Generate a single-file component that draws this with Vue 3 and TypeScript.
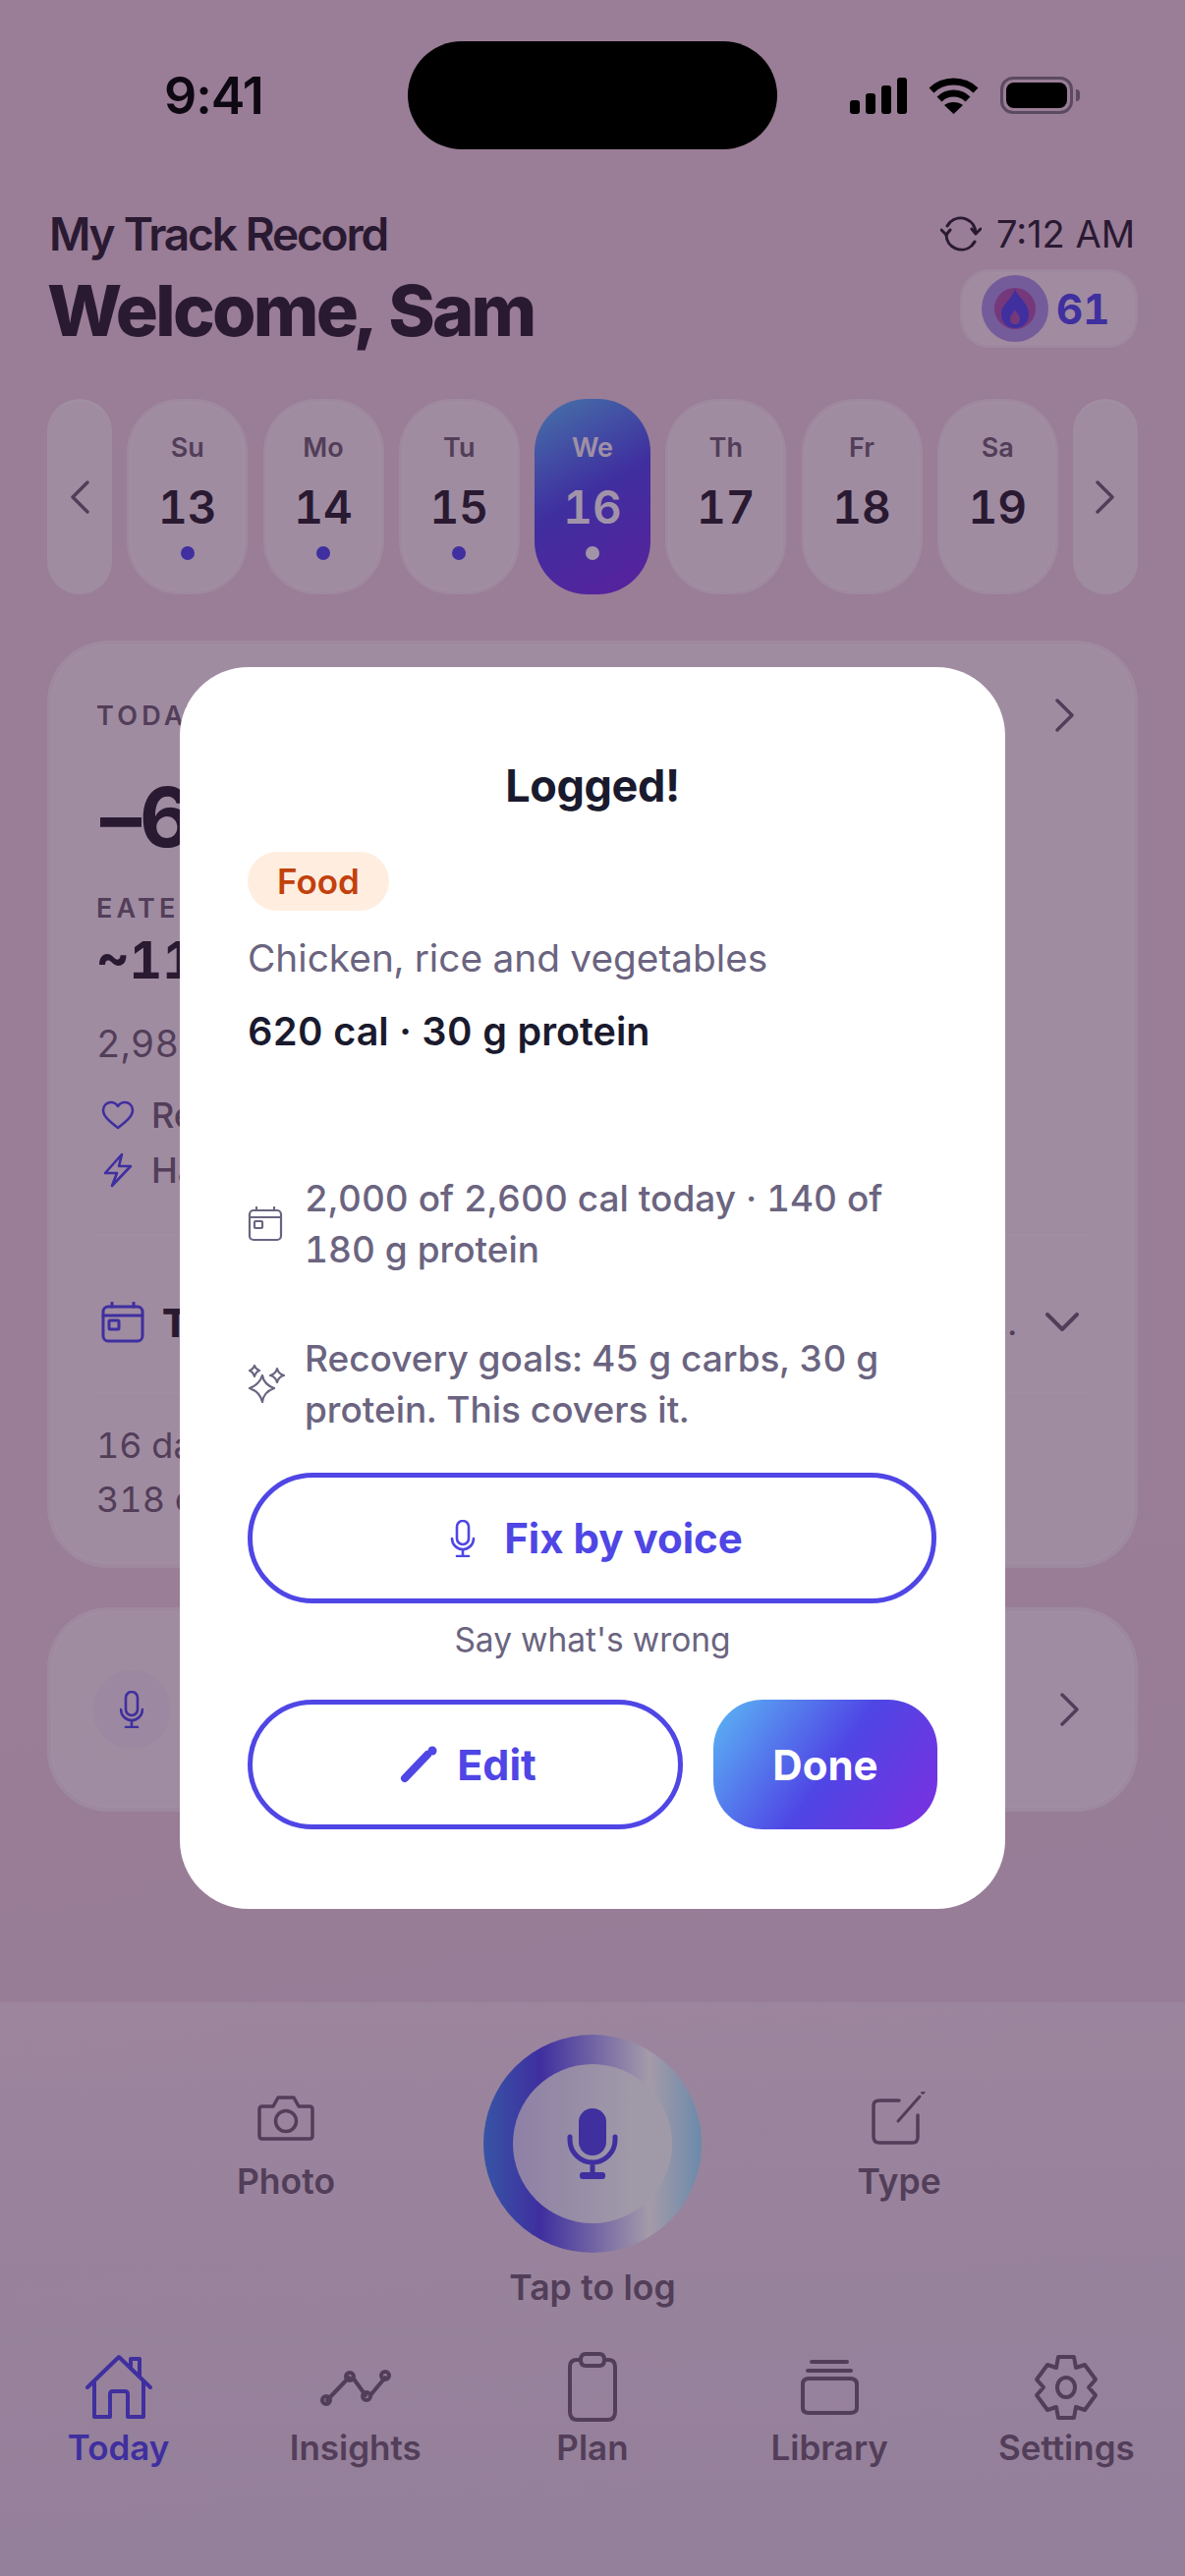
<script setup lang="ts">
interface Day { label: string; num: number; dot: boolean; active: boolean }
const days: Day[] = [
  { label: 'Su', num: 13, dot: true, active: false },
  { label: 'Mo', num: 14, dot: true, active: false },
  { label: 'Tu', num: 15, dot: true, active: false },
  { label: 'We', num: 16, dot: true, active: true },
  { label: 'Th', num: 17, dot: false, active: false },
  { label: 'Fr', num: 18, dot: false, active: false },
  { label: 'Sa', num: 19, dot: false, active: false },
]
const navPaths: { label: string; active: boolean; w: number; h: number; vb: string; d: string; dots?: number[][] }[] = [
  { label: 'Today', active: true, w: 70, h: 68, vb: '0 0 70 68', d: 'M3 34 35 3 67 34M10 28V64H26V41Q26 38 29 38H41Q44 38 44 41V64H60V28M47 14V5H56V22' },
  { label: 'Insights', active: false, w: 72, h: 40, vb: '0 0 72 40', d: 'M7 33 29 10M33 10 46 28M51 28 66 10', dots: [[6, 33], [30, 9], [47, 29], [66, 8]] },
  { label: 'Plan', active: false, w: 52, h: 72, vb: '0 0 52 72', d: 'M14 8H10Q3 8 3 15V61Q3 69 11 69H41Q49 69 49 61V15Q49 8 42 8H38M19 2H33Q38 2 38 8T33 14H19Q14 14 14 8T19 2Z' },
  { label: 'Library', active: false, w: 60, h: 58, vb: '0 0 60 58', d: 'M12 3H48M8 12H52M9 20H51Q58 20 58 26V50Q58 55 51 55H9Q3 55 3 50V26Q3 20 9 20Z' },
  { label: 'Settings', active: false, w: 66, h: 68, vb: '0 0 66 68', d: 'M25 3H41L43 14 52 11 63 26 56 34 63 42 52 57 43 54 41 65H25L23 54 14 57 3 42 10 34 3 26 14 11 23 14ZM33 24A9 10 0 1 1 33 44 9 10 0 0 1 33 24Z' },
]
</script>

<template>
  <div class="screen">
    <div class="status">
      <span class="clock">9:41</span>
      <div class="island"></div>
      <div class="status-icons">
        <svg width="58" height="37" viewBox="0 0 58 37" fill="#000">
          <rect x="0" y="23" width="10" height="14" rx="3" />
          <rect x="16" y="16" width="10" height="21" rx="3" />
          <rect x="32" y="8" width="10" height="29" rx="3" />
          <rect x="48" y="0" width="10" height="37" rx="3" />
        </svg>
        <svg width="51" height="37" viewBox="0 0 51 37" fill="none" stroke="#000" stroke-width="7">
          <path d="M3 13C15 1 36 1 48 13" />
          <path d="M11 22C19 14 32 14 40 22" />
          <path d="M25.500 37 16 28C21 24 30 24 35 28Z" fill="#000" stroke="none" />
        </svg>
        <div class="battery"><i></i></div>
      </div>
    </div>

    <header class="head">
      <div>
        <div class="brand">My Track Record</div>
        <h1 class="hello">Welcome, Sam</h1>
      </div>
      <div class="head-right">
        <div class="sync">
          <svg width="42" height="36" viewBox="0 0 42 36" fill="none" stroke="#2b2330" stroke-width="3" stroke-linecap="round" stroke-linejoin="round">
            <path d="M36 17A15.500 15.500 0 0 0 10 6L7 10M6 19A15.500 15.500 0 0 0 32 30L35 26" />
            <path d="M1 14 6 19 10 14M32 13 36 18 41 13" />
          </svg>
          <span>7:12 AM</span>
        </div>
        <div class="streak">
          <div class="flame-ring">
            <div class="flame-core">
              <svg width="28" height="40" viewBox="0 0 28 40">
                <path d="M14 0C16 8 28 14 28 26 28 34 22 40 14 40 6 40 0 34 0 26 0 20 3 17 6 13 9 10 12 6 14 0Z" fill="#4f46e5" />
                <path d="M14 21C16 25 19 27 19 31 19 34 17 36 14 36 11 36 9 34 9 31 9 27 12 25 14 21Z" fill="#a855a8" />
              </svg>
            </div>
          </div>
          <span>61</span>
        </div>
      </div>
    </header>

    <section class="week">
      <div class="side">
        <svg width="20" height="34" viewBox="0 0 20 34" fill="none" stroke="#6e5f71" stroke-width="3.500" stroke-linecap="round" stroke-linejoin="round"><path d="M18 2 3 17 18 32" /></svg>
      </div>
      <div v-for="d in days" :key="d.num" class="day" :class="{ today: d.active }">
        <span class="day-label">{{ d.label }}</span>
        <span class="day-num">{{ d.num }}</span>
        <i class="day-dot" :class="{ off: !d.dot }"></i>
      </div>
      <div class="side">
        <svg width="20" height="34" viewBox="0 0 20 34" fill="none" stroke="#6e5f71" stroke-width="3.500" stroke-linecap="round" stroke-linejoin="round"><path d="M2 2 17 17 2 32" /></svg>
      </div>
    </section>

    <section class="card main-card">
      <div class="today-row">
        <span class="eyebrow">TODAY'S BALANCE</span>
        <svg width="20" height="34" viewBox="0 0 20 34" fill="none" stroke="#6e5f71" stroke-width="3.500" stroke-linecap="round" stroke-linejoin="round"><path d="M2 2 17 17 2 32" /></svg>
      </div>
      <div class="big">–620 cal</div>
      <div class="eyebrow eaten">EATEN</div>
      <div class="mid">~1100 cal</div>
      <div class="muted burn">2,984 burned so far</div>
      <div class="goal">
        <svg width="34" height="30" viewBox="0 0 34 30" fill="none" stroke="#4f46e5" stroke-width="2.600" stroke-linejoin="round"><path d="M17 28C8 21 2 16 2 10 2 5 6 2 10 2 13 2 15 3 17 6 19 3 21 2 24 2 28 2 32 5 32 10 32 16 26 21 17 28Z" /></svg>
        <span class="muted">Recovery</span>
      </div>
      <div class="goal">
        <svg width="34" height="36" viewBox="0 0 34 36" fill="none" stroke="#4f46e5" stroke-width="2.600" stroke-linejoin="round"><path d="M21 2 4 21H16L11 34 30 14H18Z" /></svg>
        <span class="muted">Hard day</span>
      </div>
      <hr class="rule first" />
      <div class="plan-row">
        <svg width="44" height="42" viewBox="0 0 44 42" fill="none" stroke="#4f46e5" stroke-width="3" stroke-linecap="round"><rect x="2" y="5" width="40" height="35" rx="5" /><path d="M2 14H42M11 1V5M33 1V5" /><rect x="8" y="19" width="10" height="9" rx="1" /></svg>
        <span class="plan-title">Tomorrow</span>
        <span class="plan-note">Rest day plan...</span>
        <svg class="plan-chev" width="34" height="20" viewBox="0 0 34 20" fill="none" stroke="#6e5f71" stroke-width="4" stroke-linecap="round" stroke-linejoin="round"><path d="M2 2 17 17 32 2" /></svg>
      </div>
      <hr class="rule second" />
      <div class="muted summary">16 days logged</div>
      <div class="muted summary">318 entries</div>
    </section>

    <section class="card voice-card">
      <div class="mic-chip">
        <svg width="24" height="38" viewBox="0 0 24 38" fill="none" stroke="#4f46e5" stroke-width="2.600" stroke-linecap="round"><rect x="6" y="1" width="12" height="24" rx="6" /><path d="M1 19A11 11 0 0 0 23 19M12 30V37M6 37H18" /></svg>
      </div>
      <span class="muted">Ask anything</span>
      <svg class="voice-chev" width="20" height="34" viewBox="0 0 20 34" fill="none" stroke="#6e5f71" stroke-width="3.500" stroke-linecap="round" stroke-linejoin="round"><path d="M2 2 17 17 2 32" /></svg>
    </section>

    <footer class="dock">
      <div class="capture">
        <div class="capture-side">
          <svg width="58" height="46" viewBox="0 0 58 46" fill="none" stroke="#6e5f71" stroke-width="3.500" stroke-linejoin="round"><path d="M5 11H16L21 2H37L42 11H53Q56 11 56 14V41Q56 44 53 44H5Q2 44 2 41V14Q2 11 5 11Z" /><circle cx="29" cy="26" r="10.500" /></svg>
          <span>Photo</span>
        </div>
        <div class="capture-mid">
          <div class="ring">
            <div class="ring-core">
              <svg width="52" height="72" viewBox="0 0 52 72" fill="none">
                <rect x="12" y="0" width="28" height="48" rx="14" fill="#4f46e5" />
                <path d="M3 29V32A23 23 0 0 0 49 32V29M26 55V68" stroke="#4f46e5" stroke-width="5" stroke-linecap="round" />
                <rect x="13" y="65" width="26" height="7" rx="3" fill="#4f46e5" />
              </svg>
            </div>
          </div>
          <span>Tap to log</span>
        </div>
        <div class="capture-side type">
          <svg width="56" height="54" viewBox="0 0 56 54" fill="none" stroke="#6e5f71" stroke-width="3.500" stroke-linecap="round"><path d="M28 9H8Q2 9 2 14V46Q2 52 8 52H42Q47 52 47 46V24" /><path d="M27 30 49 5" stroke-width="3" /><path d="M52 1 53 0" stroke-width="3.500" /></svg>
          <span>Type</span>
        </div>
      </div>
      <nav class="nav">
        <div v-for="n in navPaths" :key="n.label" class="nav-item" :class="{ on: n.active }">
          <div class="nav-icon">
            <svg :width="n.w" :height="n.h" :viewBox="n.vb" fill="none" stroke="currentColor" stroke-width="4" stroke-linecap="round" stroke-linejoin="round">
              <path :d="n.d" />
              <circle v-for="(c, i) in n.dots" :key="i" :cx="c[0]" :cy="c[1]" r="4" />
            </svg>
          </div>
          <span>{{ n.label }}</span>
        </div>
      </nav>
    </footer>

    <div class="overlay">
      <div class="modal">
        <div class="modal-title">Logged!</div>
        <span class="pill">Food</span>
        <div class="meal">Chicken, rice and vegetables</div>
        <div class="macros">620 cal · 30 g protein</div>
        <div class="note cal-note">
          <svg width="36" height="36" viewBox="0 0 36 36" fill="none" stroke="#6b6480" stroke-width="2.200" stroke-linecap="round"><rect x="2" y="4" width="32" height="30" rx="4" /><path d="M2 11H34M9 1V4M27 1V4" /><rect x="7" y="15" width="8" height="7" rx="1" /></svg>
          <span>2,000 of 2,600 cal today · 140 of 180 g protein</span>
        </div>
        <div class="note spark-note">
          <svg width="38" height="40" viewBox="0 0 38 40" fill="none" stroke="#6b6480" stroke-width="2.200" stroke-linejoin="round"><path d="M15 11C16 17 19 21 27 24 19 27 16 31 15 38 13 31 10 27 2 24 10 21 13 17 15 11Z" /><path d="M7 1C8 4 9 5 12 6 9 7 8 9 7 12 6 9 5 7 2 6 5 5 6 4 7 1Z" /><path d="M30 4C31 8 33 10 37 11 33 12 31 14 30 18 29 14 27 12 23 11 27 10 29 8 30 4Z" /></svg>
          <span>Recovery goals: 45 g carbs, 30 g protein. This covers it.</span>
        </div>
        <button class="btn outline fix">
          <svg width="26" height="38" viewBox="0 0 26 38" fill="none" stroke="#4f46e5" stroke-width="2.600" stroke-linecap="round"><rect x="7" y="1" width="12" height="24" rx="6" /><path d="M2 19A11 11 0 0 0 24 19M13 30V37M7 37H19" /></svg>
          <span>Fix by voice</span>
        </button>
        <div class="hint">Say what's wrong</div>
        <div class="actions">
          <button class="btn outline edit">
            <svg width="38" height="38" viewBox="0 0 38 38" fill="none"><path d="M5 33 28 9" stroke="#4f46e5" stroke-width="8" stroke-linecap="round" /><circle cx="33" cy="5" r="4.500" fill="#4f46e5" /></svg>
            <span>Edit</span>
          </button>
          <button class="btn done">Done</button>
        </div>
      </div>
    </div>
  </div>
</template>

<style>
html, body { margin: 0; }
</style>

<style scoped>
.screen {
  position: relative;
  width: 1206px;
  height: 2622px;
  overflow: hidden;
  display: flex;
  flex-direction: column;
  font-family: Inter, "Noto Sans", sans-serif;
  font-variant-numeric: tabular-nums;
  color: #2b2330;
  background: linear-gradient(170deg, #e6c8d5 0%, #e6c8d6 60%, #dccadb 100%);
}
svg { display: block; flex: none; }

.status {
  position: relative;
  z-index: 3;
  height: 110px;
  margin-top: 42px;
  flex: none;
  display: flex;
  align-items: center;
}
.clock { position: absolute; left: 167px; font-size: 52px; font-weight: 600; letter-spacing: -1px; font-variant-numeric: normal; color: #0e0812; }
.island { position: absolute; left: 415px; width: 376px; height: 110px; border-radius: 55px; background: #000; }
.status-icons { position: absolute; left: 865px; display: flex; align-items: center; gap: 22px; }
.battery { position: relative; width: 74px; height: 38px; box-sizing: border-box; border: 3px solid #5b4a60; border-radius: 13px; padding: 3px; }
.battery i { display: block; height: 100%; background: #000; border-radius: 8px; }
.battery::after { content: ""; position: absolute; right: -10px; top: 10px; width: 4px; height: 12px; border-radius: 0 4px 4px 0; background: #5b4a60; }

.head { flex: none; display: flex; justify-content: space-between; padding: 60px 48px 0 50px; height: 254px; box-sizing: border-box; }
.brand { font-size: 46px; font-weight: 600; letter-spacing: -2.200px; line-height: 52px; }
.hello { margin: 10px 0 0 -2px; font-size: 72px; font-weight: 800; letter-spacing: -2.800px; line-height: 84px; }
.head-right { display: flex; flex-direction: column; align-items: flex-end; }
.sync { display: flex; align-items: center; gap: 15px; font-size: 38px; line-height: 52px; margin-right: 3px; font-variant-numeric: normal; }
.streak { margin-top: 10px; width: 181px; height: 80px; box-sizing: border-box; border-radius: 30px; border: 3px solid rgba(200, 175, 200, .1); box-shadow: inset 0 0 0 1.500px rgba(255, 255, 255, .12); background: rgba(255, 255, 255, .42); display: flex; align-items: center; padding-left: 19px; gap: 8px; font-size: 42px; font-weight: 700; color: #4f46e5; }
.flame-ring { flex: none; width: 68px; height: 68px; border-radius: 50%; background: rgba(118, 92, 215, .6); display: flex; align-items: center; justify-content: center; }
.flame-core { width: 42px; height: 42px; border-radius: 50%; background: #a855a8; display: flex; align-items: center; justify-content: center; }

.week { flex: none; margin: 0 48px; height: 199px; display: flex; justify-content: space-between; }
.side, .day { box-sizing: border-box; background: rgba(255, 255, 255, .45); display: flex; }
.side { width: 66px; border-radius: 33px; align-items: center; justify-content: center; box-shadow: inset 0 3px 0 rgba(255, 255, 255, .1); }
.day { width: 123px; border-radius: 54px; border: 3px solid rgba(200, 175, 200, .1); box-shadow: inset 0 0 0 1.500px rgba(255, 255, 255, .14); flex-direction: column; align-items: center; color: #2b2330; }
.day-label { margin-top: 30px; font-size: 27px; line-height: 34px; font-weight: 600; color: #6e5f71; }
.day-num { margin-top: 16px; font-size: 46px; line-height: 54px; font-weight: 600; }
.day-dot { margin-top: 13px; width: 14px; height: 14px; border-radius: 50%; background: #4f46e5; }
.day-dot.off { visibility: hidden; }
.today { width: 118px; border: 0; box-shadow: none; background: linear-gradient(150deg, #5bb8f5 0%, #4f46e5 48%, #7c2fe0 100%); color: #fff; }
.today .day-label { margin-top: 33px; color: #f0e8ee; }
.today .day-num { color: #f4eef4; }
.today .day-dot { background: #f4eef4; }

.card { flex: none; box-sizing: border-box; margin: 0 48px; border-radius: 62px; background: rgba(255, 255, 255, .45); border: 4px solid rgba(200, 175, 200, .1); box-shadow: inset 0 0 0 1.500px rgba(255, 255, 255, .14); }
.main-card { margin-top: 47px; height: 944px; padding: 0 46px; }
.today-row { display: flex; justify-content: space-between; align-items: center; height: 34px; margin-top: 55px; }
.today-row svg { transform: translateX(-14px); }
.eyebrow { font-size: 27px; font-weight: 600; letter-spacing: 4.200px; color: #6e5f71; }
.big { margin: 37px 0 0 4px; font-size: 84px; line-height: 100px; font-weight: 700; letter-spacing: -2px; }
.eaten { margin-top: 23px; line-height: 40px; }
.mid { margin-top: 2px; font-size: 52px; line-height: 62px; font-weight: 700; }
.muted { font-size: 36px; line-height: 44px; color: #6e5f71; }
.burn { margin-top: 31px; font-size: 38px; }
.goal { display: flex; align-items: center; gap: 17px; height: 44px; margin: 29px 0 0 5px; font-weight: 500; }
.goal + .goal { margin-top: 12px; }
.goal .muted { font-weight: 500; }
.rule { border: 0; height: 2px; margin: 0; background: rgba(255, 255, 255, .14); }
.rule.first { margin-top: 43px; }
.rule.second { margin-top: 49px; }
.plan-row { display: flex; align-items: center; gap: 18px; margin: 66px 0 0 5px; height: 44px; }
.plan-title { flex: 1; font-size: 40px; font-weight: 800; }
.plan-note { font-size: 36px; color: #6e5f71; width: 300px; margin: 0 21px 0 -100px; text-align: right; }
.plan-chev { transform: translateX(-10px); }
.summary { line-height: 55px; }
.rule.second + .summary { margin-top: 25px; }

.voice-card { margin-top: 40px; height: 208px; padding: 0 46px; display: flex; align-items: center; gap: 30px; }
.mic-chip { flex: none; margin-left: -4px; width: 80px; height: 80px; border-radius: 50%; background: rgba(120, 100, 220, .05); display: flex; align-items: center; justify-content: center; }
.voice-chev { margin-left: auto; transform: translateX(-9px); }

.dock { margin-top: 194px; flex: 1; display: flex; flex-direction: column; background: linear-gradient(180deg, rgba(242, 232, 240, .42), rgba(215, 215, 232, .18)); }
.capture { height: 334px; display: flex; justify-content: center; align-items: flex-start; padding-top: 33px; font-size: 35.500px; font-weight: 600; color: #6e5f71; }
.capture-mid { width: 222px; display: flex; flex-direction: column; align-items: center; white-space: nowrap; }
.capture-mid > span { margin-top: 15px; line-height: 42px; }
.capture-side { width: 200px; margin: 0 101px; height: 170px; display: flex; flex-direction: column; align-items: center; gap: 22px; }
.capture-side.type { gap: 18px; }
.capture-side span { line-height: 40px; }
.capture-side svg { margin-top: auto; }
.ring { width: 222px; height: 222px; border-radius: 50%; background: linear-gradient(90deg, #4185ee 0%, #4f46e5 26%, #f8faf6 76%, #98def8 100%); display: flex; align-items: center; justify-content: center; }
.ring-core { width: 162px; height: 162px; border-radius: 50%; background: linear-gradient(90deg, #d2cdf0, #f0f8f3 75%); display: flex; align-items: center; justify-content: center; }

.nav { display: grid; grid-template-columns: repeat(5, 1fr); margin-top: -11px; }
.nav-item { display: flex; flex-direction: column; align-items: center; font-size: 35px; font-weight: 600; color: #6e5f71; }
.nav-item.on { color: #4f46e5; }
.nav-icon { height: 72px; display: flex; align-items: center; justify-content: center; }
.nav-item span { margin-top: 4px; line-height: 42px; }

.overlay { position: absolute; inset: 0; z-index: 2; background: rgba(40, 12, 55, .4); display: flex; align-items: center; justify-content: center; }
.modal { box-sizing: border-box; width: 840px; height: 1264px; border-radius: 70px; background: #fff; padding: 94px 69px 0; color: #1a1a2e; }
.modal-title { text-align: center; font-size: 45px; font-weight: 700; line-height: 54px; letter-spacing: -.4px; }
.pill { display: block; width: fit-content; margin-top: 40px; padding: 0 30px; height: 60px; line-height: 60px; border-radius: 30px; background: #ffeee0; color: #c2410c; font-size: 35px; font-weight: 600; }
.meal { margin-top: 24px; font-size: 38.800px; line-height: 48px; color: #6b6480; }
.macros { margin-top: 27px; font-size: 39.500px; line-height: 48px; font-weight: 600; }
.note { display: flex; align-items: center; gap: 22px; font-size: 37px; line-height: 52px; font-weight: 500; color: #6b6480; }
.cal-note { margin-top: 120px; }
.spark-note { margin-top: 59px; gap: 20px; }
.btn { box-sizing: border-box; font-family: inherit; display: flex; align-items: center; justify-content: center; cursor: pointer; }
.outline { background: #fff; border: 5px solid #4f46e5; color: #4f46e5; font-size: 42px; font-weight: 700; }
.fix { width: 701px; height: 133px; margin-top: 38px; border-radius: 67px; gap: 29px; padding: 0 0 0 9px; }
.hint { margin-top: 15px; text-align: center; font-size: 33.500px; line-height: 44px; color: #6b6480; }
.actions { margin-top: 39px; display: flex; gap: 31px; }
.edit { width: 443px; height: 132px; border-radius: 66px; gap: 20px; padding: 0 0 0 6px; font-size: 43px; }
.done { width: 228px; height: 132px; border: 0; border-radius: 50px; background: linear-gradient(125deg, #5bb8f5 0%, #4f46e5 52%, #7c2fe0 100%); color: #fff; font-size: 42px; font-weight: 700; }
</style>
